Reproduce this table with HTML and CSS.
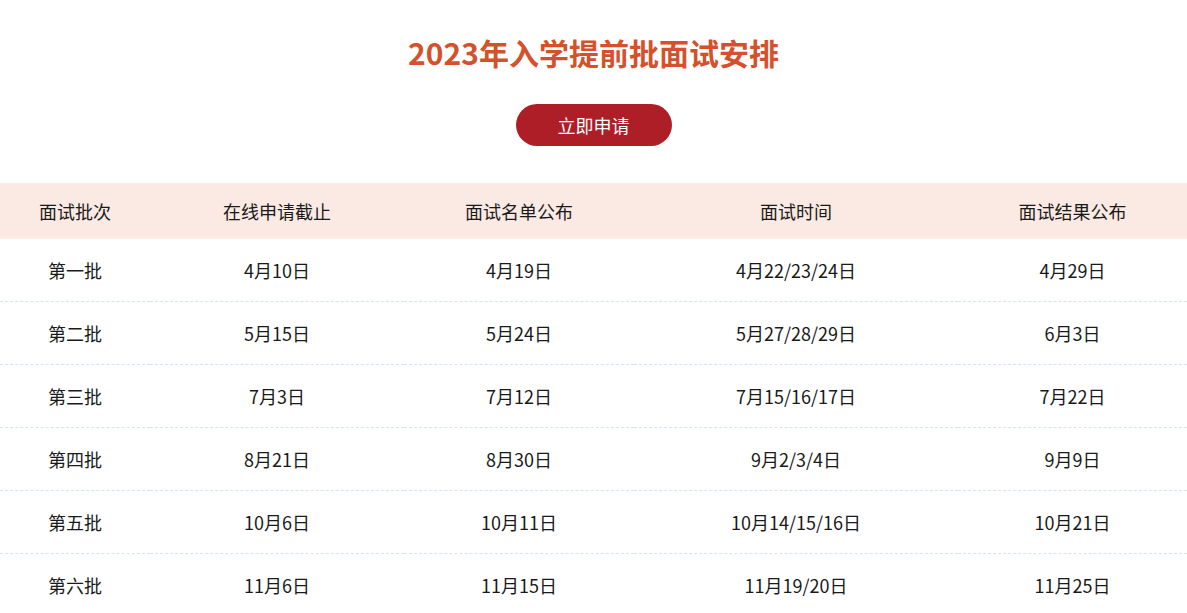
FILE: index.html
```html
<!DOCTYPE html>
<html lang="zh">
<head>
<meta charset="utf-8">
<link rel="stylesheet" href="styles.css">
</head>
<body>
<div class="page">
  <h1 class="title">2023年入学提前批面试安排</h1>
  <div class="actions"><a class="apply-btn" href="#">立即申请</a></div>
  <table class="schedule">
    <colgroup>
      <col class="c1"><col class="c2"><col class="c3"><col class="c4"><col class="c5">
    </colgroup>
    <thead>
      <tr><th>面试批次</th><th>在线申请截止</th><th>面试名单公布</th><th>面试时间</th><th>面试结果公布</th></tr>
    </thead>
    <tbody>
      <tr><td>第一批</td><td>4月10日</td><td>4月19日</td><td>4月22/23/24日</td><td>4月29日</td></tr>
      <tr><td>第二批</td><td>5月15日</td><td>5月24日</td><td>5月27/28/29日</td><td>6月3日</td></tr>
      <tr><td>第三批</td><td>7月3日</td><td>7月12日</td><td>7月15/16/17日</td><td>7月22日</td></tr>
      <tr><td>第四批</td><td>8月21日</td><td>8月30日</td><td>9月2/3/4日</td><td>9月9日</td></tr>
      <tr><td>第五批</td><td>10月6日</td><td>10月11日</td><td>10月14/15/16日</td><td>10月21日</td></tr>
      <tr><td>第六批</td><td>11月6日</td><td>11月15日</td><td>11月19/20日</td><td>11月25日</td></tr>
    </tbody>
  </table>
</div>
</body>
</html>
```
FILE: styles.css
```css
html, body {
  margin: 0;
  padding: 0;
  background: #ffffff;
}
body {
  font-family: "Noto Sans CJK SC", "Noto Sans", sans-serif;
  color: #1a1a1a;
}
.page {
  padding-top: 30px;
}
.title {
  margin: 0;
  text-align: center;
  font-size: 30px;
  line-height: 44px;
  font-weight: 700;
  color: #d4512b;
}
.actions {
  display: flex;
  justify-content: center;
  margin-top: 30px;
}
.apply-btn {
  display: flex;
  align-items: center;
  justify-content: center;
  width: 156px;
  height: 42px;
  border-radius: 21px;
  background: #ad1e26;
  color: #ffffff;
  font-size: 18px;
  text-decoration: none;
}
.schedule {
  margin-top: 37px;
  width: 100%;
  border-collapse: collapse;
  table-layout: fixed;
  font-size: 18px;
}
.c1 { width: 150px; }
.c2 { width: 254px; }
.c3 { width: 230px; }
.c4 { width: 324px; }
.c5 { width: auto; }
.schedule th {
  height: 56px;
  padding: 0;
  background: #fbe9e3;
  font-weight: 400;
  text-align: center;
}
.schedule td {
  height: 62px;
  padding: 0;
  text-align: center;
  border-bottom: 1px dashed #d8e3ee;
}
```
